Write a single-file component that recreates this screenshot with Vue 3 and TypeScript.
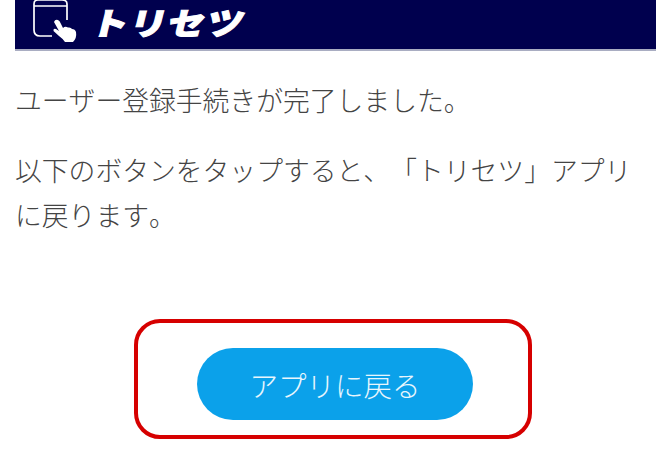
<script setup lang="ts">
const lines: string[] = ['ユーザー登録手続きが完了しました。', '以下のボタンをタップすると、「トリセツ」アプリに戻ります。']
</script>

<template>
  <div class="page">
    <header class="bar">
      <svg class="icon" width="46" height="44" viewBox="0 0 46 44" fill="none">
        <path d="M2 30 V4 Q2 0 6 0 H30 Q35 0 35 4 V20 M2 6 H35 M2 30 Q2 36 8 36 H20" stroke="#fff" stroke-width="1.7" />
        <path d="M22 22 Q23 19 26 20 Q28 21 29 24 L31 28 Q33 26 36 27.500 Q39 27 40 29 Q43 29 44 32 Q45 38 41 42 L33 42 Q30 38 27 36 L21.500 31 Q21 28 24 29 L27 31 Z" fill="#fff" />
      </svg>
      <span class="logo">トリセツ</span>
    </header>
    <main class="body">
      <p v-for="line in lines" :key="line" class="text">{{ line }}</p>
    </main>
    <div class="cta">
      <div class="frame">
        <button class="btn" type="button">アプリに戻る</button>
      </div>
    </div>
  </div>
</template>

<style>
html, body { margin: 0; background: #fff; }
</style>

<style scoped>
.page {
  width: 670px;
  height: 450px;
  overflow: hidden;
  background: #fff;
  font-family: "Noto Sans CJK JP", "Noto Sans", sans-serif;
  font-weight: 300;
  font-kerning: none;
  text-spacing-trim: space-all;
}
.bar {
  box-sizing: border-box;
  width: 641px;
  height: 51px;
  margin-left: 15px;
  padding: 0 0 0 17px;
  display: flex;
  align-items: flex-start;
  gap: 14px;
  background: #00004e;
  border-bottom: 2px solid #a9adc2;
}
.icon { flex: none; }
.logo {
  color: #fff;
  font-size: 31px;
  font-weight: 900;
  line-height: 44px;
  letter-spacing: 1px;
  transform: skewX(-14deg) scaleX(1.2);
  transform-origin: left center;
  -webkit-text-stroke: 1px #fff;
}
.body { padding: 26px 30px 0 15px; }
.text {
  margin: 0 0 25px;
  font-size: 26.800px;
  line-height: 45px;
  color: #444;
}
.cta {
  display: flex;
  margin-top: 82px;
  padding-left: 134px;
}
.frame {
  box-sizing: border-box;
  width: 398px;
  height: 120px;
  border: 4px solid #d60000;
  border-radius: 26px;
  padding: 25px 0 0 59px;
  display: flex;
}
.btn {
  width: 276px;
  height: 72px;
  border: 0;
  border-radius: 36px;
  background: #0ba1ea;
  color: #e8f6fd;
  font: inherit;
  font-size: 28.500px;
  padding: 0;
}
</style>
